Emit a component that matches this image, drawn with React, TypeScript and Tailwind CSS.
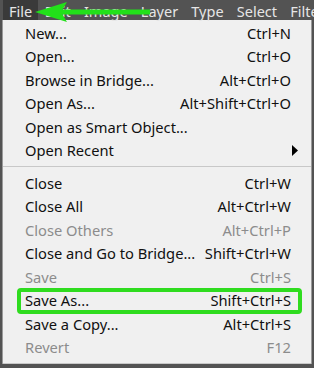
import React from "react";

type Item = { label?: string; shortcut?: string; disabled?: boolean; sub?: boolean; sep?: boolean; boxed?: boolean };

const items: Item[] = [
  { label: "New...", shortcut: "Ctrl+N" },
  { label: "Open...", shortcut: "Ctrl+O" },
  { label: "Browse in Bridge...", shortcut: "Alt+Ctrl+O" },
  { label: "Open As...", shortcut: "Alt+Shift+Ctrl+O" },
  { label: "Open as Smart Object..." },
  { label: "Open Recent", sub: true },
  { sep: true },
  { label: "Close", shortcut: "Ctrl+W" },
  { label: "Close All", shortcut: "Alt+Ctrl+W" },
  { label: "Close Others", shortcut: "Alt+Ctrl+P", disabled: true },
  { label: "Close and Go to Bridge...", shortcut: "Shift+Ctrl+W" },
  { label: "Save", shortcut: "Ctrl+S", disabled: true },
  { label: "Save As...", shortcut: "Shift+Ctrl+S", boxed: true },
  { label: "Save a Copy...", shortcut: "Alt+Ctrl+S" },
  { label: "Revert", shortcut: "F12", disabled: true },
  { sep: true },
];

const menus = ["File", "Edit", "Image", "Layer", "Type", "Select", "Filter"];

export default function App() {
  return (
    <div className="relative h-[368px] w-[314px] overflow-hidden bg-[#535353] font-['Noto_Sans',sans-serif]">
      {/* Menu bar */}
      <div className="flex h-[20px] whitespace-nowrap pl-[3px] text-[14.5px] text-[#e6e6e6]">
        {menus.map((m, i) => (
          <div
            key={m}
            className={
              i === 0
                ? "flex h-[20px] items-center bg-[#3a3a3a] px-[6px] pt-[3px]"
                : "flex h-[20px] items-center px-[6.6px] pt-[3px]"
            }
          >
            {m}
          </div>
        ))}
      </div>

      {/* Dropdown */}
      <div className="ml-[2px] w-[310px] border-l border-r border-[#9a9a9a] bg-[#f0f0f0] pt-[1px] text-[14.7px] text-black">
        {items.map((it, i) =>
          it.sep ? (
            <div key={i} className="my-[4px] h-px bg-[#c8c8c8]" />
          ) : (
            <div
              key={i}
              className={
                "relative flex h-[23.5px] items-center justify-between whitespace-nowrap pl-[22px] pr-[20px] " +
                (it.disabled ? "text-[#8c8c8c]" : "text-[#111]")
              }
            >
              <span>{it.label}</span>
              {it.shortcut && <span>{it.shortcut}</span>}
              {it.sub && (
                <svg width="6" height="11" viewBox="0 0 6 11" className="mr-[-7px]">
                  <polygon points="0,0 6,5.5 0,11" fill="#000" />
                </svg>
              )}
              {it.boxed && (
                <div className="absolute left-[14px] right-[9px] top-[-1px] bottom-[-2px] rounded-[4px] border-[4px] border-[#2fdc1f]" />
              )}
            </div>
          )
        )}
      </div>

      {/* Green arrow */}
      <svg className="absolute left-0 top-0" width="314" height="30" viewBox="0 0 314 30">
        <line x1="60" y1="12" x2="150" y2="12" stroke="#22e01a" strokeWidth="5" />
        <polygon points="35,12 67,2 61,12 67,22" fill="#22e01a" />
      </svg>
    </div>
  );
}
